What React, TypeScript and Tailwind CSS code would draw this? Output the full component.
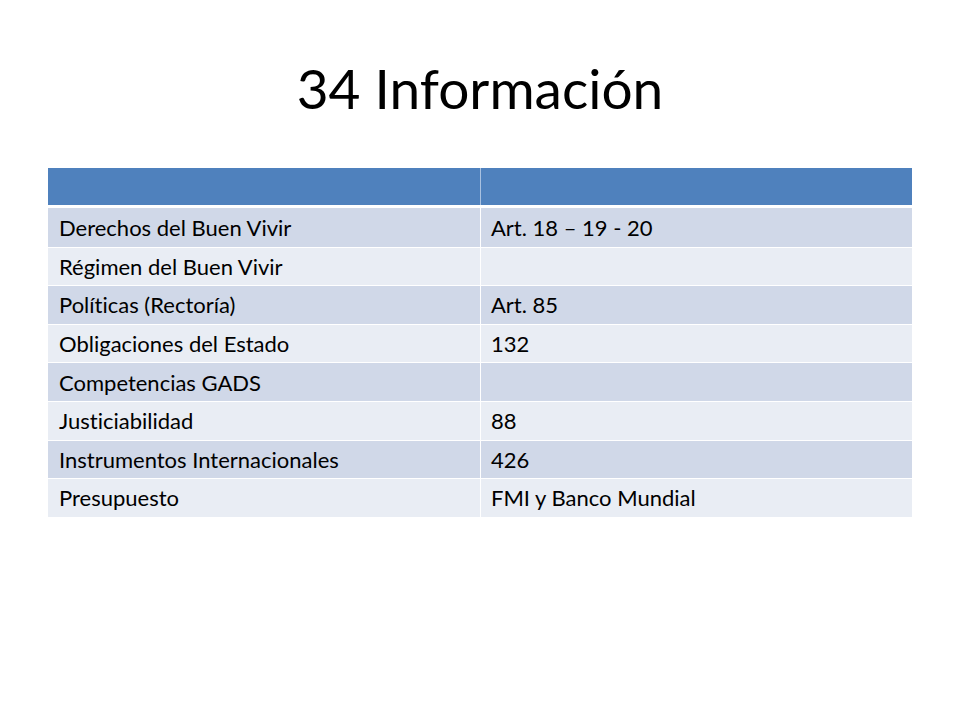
const rows: [string, string][] = [
  ['Derechos del Buen Vivir', 'Art. 18 – 19 - 20'],
  ['Régimen del Buen Vivir', ''],
  ['Políticas (Rectoría)', 'Art. 85'],
  ['Obligaciones del Estado', '132'],
  ['Competencias GADS', ''],
  ['Justiciabilidad', '88'],
  ['Instrumentos Internacionales', '426'],
  ['Presupuesto', 'FMI y Banco Mundial'],
];

export default function App() {
  return (
    <div className="h-[720px] w-[960px] bg-white font-['Lato',sans-serif] text-black [font-variant-ligatures:none]">
      <h1 className="flex h-[168px] items-start justify-center pt-[61px] text-[55px] leading-none">
        34 Información
      </h1>
      <div className="mx-[48px] flex flex-col">
        <div className="grid h-[37px] grid-cols-2 bg-[#4f81bd]">
          <div />
          <div className="border-l border-[#a9c1e0]" />
        </div>
        <div className="h-[3px]" />
        {rows.map(([a, b], i) => (
          <div
            key={a}
            className={`grid h-[38.6px] grid-cols-2 border-white text-[22px] ${i > 0 ? 'border-t' : ''} ${
              i % 2 === 0 ? 'bg-[#d0d8e8]' : 'bg-[#e9edf4]'
            }`}
          >
            <div className="flex items-center px-[11px]">{a}</div>
            <div className="flex items-center border-l border-white px-[10px]">{b}</div>
          </div>
        ))}
      </div>
    </div>
  );
}
